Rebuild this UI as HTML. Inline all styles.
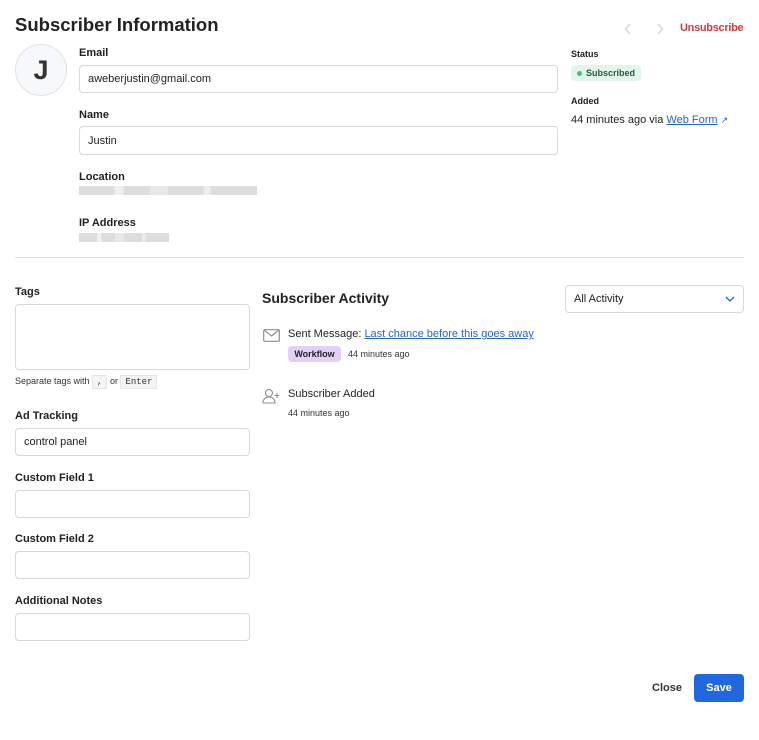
<!DOCTYPE html>
<html><head><meta charset="utf-8"><style>
*{box-sizing:border-box;margin:0;padding:0}
body{width:759px;height:740px;background:#fff;font-family:"Liberation Sans",sans-serif;color:#222;position:relative;overflow:hidden}
.a{position:absolute}
.lbl{font-size:11px;font-weight:bold;color:#222}
.sl{font-size:9px;font-weight:bold;color:#222}
.inp{position:absolute;border:1px solid #d6d8dc;border-radius:4px;background:#fff;font-size:11px;padding-left:8px;display:flex;align-items:center;color:#222}
.blur{position:absolute;height:9px;background:linear-gradient(90deg,#ddd 0 20%,#f0f0f0 20% 25%,#ddd 25% 40%,#e8e8e8 40% 50%,#ddd 50% 70%,#eee 70% 74%,#ddd 74%)}
a{color:#2464d6;text-decoration:underline}
</style></head><body>
<div class="a" style="left:15px;top:14px;font-size:18.5px;font-weight:bold;color:#222">Subscriber Information</div>
<div class="a" style="left:15px;top:44px;width:52px;height:52px;border-radius:50%;border:1px solid #e0e2e6;background:#f7f8fa;font-size:27px;font-weight:bold;color:#333;display:flex;align-items:center;justify-content:center">J</div>
<div class="a lbl" style="left:79px;top:47px">Email</div>
<div class="inp" style="left:79px;top:65px;width:479px;height:28px">aweberjustin@gmail.com</div>
<div class="a lbl" style="left:79px;top:109px">Name</div>
<div class="inp" style="left:79px;top:126px;width:479px;height:29px">Justin</div>
<div class="a lbl" style="left:79px;top:171px">Location</div>
<div class="blur" style="left:79px;top:186px;width:178px"></div>
<div class="a lbl" style="left:79px;top:217px">IP Address</div>
<div class="blur" style="left:79px;top:233px;width:90px"></div>

<svg class="a" style="left:624px;top:23px" width="8" height="12" viewBox="0 0 8 12"><path d="M6 1L1.5 6 6 11" fill="none" stroke="#c8cedb" stroke-width="1.2"/></svg>
<svg class="a" style="left:656px;top:23px" width="8" height="12" viewBox="0 0 8 12"><path d="M2 1l4.5 5L2 11" fill="none" stroke="#c8cedb" stroke-width="1.2"/></svg>
<div class="a" style="left:680px;top:22px;color:#d13a3a;font-size:11px;font-weight:bold;letter-spacing:-0.3px">Unsubscribe</div>
<div class="a sl" style="left:571px;top:49px">Status</div>
<div class="a" style="left:571px;top:65px;width:70px;height:16px;background:#e3f5ea;border-radius:4px;font-size:9px;color:#235a3a;font-weight:bold;display:flex;align-items:center;padding-left:6px"><span style="width:5px;height:5px;border-radius:50%;background:#45c07a;margin-right:4px"></span>Subscribed</div>
<div class="a sl" style="left:571px;top:96px">Added</div>
<div class="a" style="left:571px;top:114px;font-size:11px">44 minutes ago via <a>Web Form</a> <span style="color:#2464d6;font-size:9px">↗</span></div>

<div class="a" style="left:15px;top:257px;width:729px;height:1px;background:#dcdfe3"></div>

<div class="a lbl" style="left:15px;top:286px">Tags</div>
<div class="inp" style="left:15px;top:304px;width:235px;height:66px"></div>
<div class="a" style="left:15px;top:376px;font-size:9px;color:#333">Separate tags with <span style="font-family:'Liberation Mono';background:#f3f4f6;border:1px solid #e3e5e8;padding:1px 4px">,</span> or <span style="font-family:'Liberation Mono';background:#f3f4f6;border:1px solid #e3e5e8;padding:1px 4px">Enter</span></div>
<div class="a lbl" style="left:15px;top:410px">Ad Tracking</div>
<div class="inp" style="left:15px;top:428px;width:235px;height:28px">control panel</div>
<div class="a lbl" style="left:15px;top:472px">Custom Field 1</div>
<div class="inp" style="left:15px;top:490px;width:235px;height:28px"></div>
<div class="a lbl" style="left:15px;top:533px">Custom Field 2</div>
<div class="inp" style="left:15px;top:551px;width:235px;height:28px"></div>
<div class="a lbl" style="left:15px;top:595px">Additional Notes</div>
<div class="inp" style="left:15px;top:613px;width:235px;height:28px"></div>

<div class="a" style="left:262px;top:290px;font-size:14px;font-weight:bold">Subscriber Activity</div>
<div class="inp" style="left:565px;top:285px;width:179px;height:28px">All Activity<svg style="position:absolute;right:8px;top:10px" width="10" height="7" viewBox="0 0 10 7"><path d="M1 1l4 4 4-4" fill="none" stroke="#2464d6" stroke-width="1.3"/></svg></div>
<svg class="a" style="left:263px;top:329px" width="17" height="13" viewBox="0 0 17 13"><rect x="0.7" y="0.7" width="15.6" height="11.6" rx="1" fill="none" stroke="#8a8f99" stroke-width="1.2"/><path d="M1 1l7.5 6L16 1" fill="none" stroke="#8a8f99" stroke-width="1.2"/></svg>
<div class="a" style="left:288px;top:328px;font-size:11px">Sent Message: <a>Last chance before this goes away</a></div>
<div class="a" style="left:288px;top:346px;width:53px;height:16px;background:#e3d0fa;border-radius:4px;font-size:9px;font-weight:bold;display:flex;align-items:center;justify-content:center;color:#222">Workflow</div>
<div class="a" style="left:348px;top:349px;font-size:9px;color:#333">44 minutes ago</div>
<svg class="a" style="left:262px;top:388px" width="20" height="16" viewBox="0 0 20 16"><circle cx="7" cy="5" r="3.5" fill="none" stroke="#8a8f99" stroke-width="1.1"/><path d="M1 15c0-4 3-6 6-6s6 2 6 6z" fill="none" stroke="#8a8f99" stroke-width="1.1"/><path d="M15 5v5M12.5 7.5h5" stroke="#8a8f99" stroke-width="1.1"/></svg>
<div class="a" style="left:288px;top:388px;font-size:11px">Subscriber Added</div>
<div class="a" style="left:288px;top:408px;font-size:9px;color:#333">44 minutes ago</div>

<div class="a" style="left:652px;top:682px;font-size:11px;font-weight:bold;color:#333">Close</div>
<div class="a" style="left:694px;top:674px;width:50px;height:28px;background:#1f68e0;border-radius:4px;color:#fff;font-size:11px;font-weight:bold;display:flex;align-items:center;justify-content:center">Save</div>
</body></html>
